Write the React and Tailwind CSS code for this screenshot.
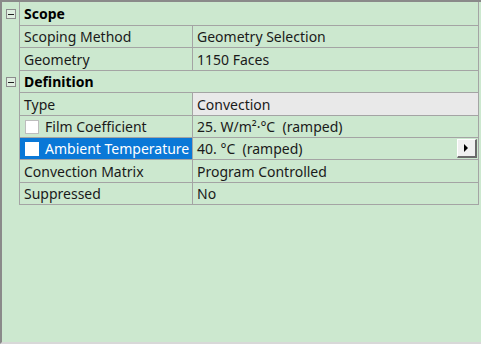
import React from 'react';

const font = { fontFamily: '"Segoe UI", "Noto Sans", "Open Sans", sans-serif' };

const Minus = () => (
    <div className="w-[10px] h-[10px] border border-[#8c8c8c] bg-[#dfeee0] flex items-center justify-center">
        <div className="w-[6px] h-px bg-[#222]" />
    </div>
);

const Check = ({ light }) => (
    <div className={`w-[14px] h-[14px] shrink-0 bg-white border ${light ? 'border-white' : 'border-[#bdbdbd]'}`} />
);

const Header = ({ label, h }) => (
    <div className="flex" style={{ height: h }}>
        <div className="w-[17px] shrink-0 flex items-center justify-center">
            <Minus />
        </div>
        <div className="flex-1 flex items-center pl-[4px] font-bold text-[14px] text-black border-l border-b border-[#a4a4a4]">
            {label}
        </div>
    </div>
);

const Row = ({ name, value, h, check, selected, grey, arrow }) => (
    <div className="flex" style={{ height: h }}>
        <div className="w-[17px] shrink-0" />
        <div
            className={`w-[173px] shrink-0 flex items-center gap-[6px] text-[14px] border-l border-b border-[#a4a4a4] ${check ? 'pl-[5px]' : 'pl-[4px]'} ${selected ? 'bg-[#0a78d7] text-white' : 'text-[#1a1a1a]'}`}
        >
            {check && <Check light={selected} />}
            <span className="whitespace-nowrap">{name}</span>
        </div>
        <div
            className={`flex-1 flex items-center pl-[4px] text-[14px] text-[#1a1a1a] border-l border-b border-[#a4a4a4] ${grey ? 'bg-[#e9e9e9]' : ''}`}
        >
            <span className="flex-1 whitespace-pre">{value}</span>
            {arrow && (
                <div className="w-[20px] h-[19px] mr-px bg-[#f0f0f0] border-r-2 border-b-2 border-[#6a6a6a] border-t border-l border-t-white border-l-white flex items-center justify-center">
                    <svg width="5" height="8" viewBox="0 0 5 8"><path d="M0 0 L4 4 L0 8 Z" fill="#000" /></svg>
                </div>
            )}
        </div>
    </div>
);

export default function App() {
    return (
        <div className="w-[481px] h-[344px] bg-[#cce8cf] overflow-hidden" style={font}>
            <div className="h-full border-t-2 border-l-2 border-b-2 border-t-[#8a8a8a] border-l-[#8a8a8a] border-b-[#d8d8d8] pr-[2px]">
                <div className="border-r border-[#a4a4a4]">
                    <Header label="Scope" h={24} />
                    <Row name="Scoping Method" value="Geometry Selection" h={22} />
                    <Row name="Geometry" value="1150 Faces" h={23} />
                    <Header label="Definition" h={22} />
                    <Row name="Type" value="Convection" h={23} grey />
                    <Row name="Film Coefficient" value={'25. W/m²·°C  (ramped)'} h={22} check />
                    <Row name="Ambient Temperature" value={'40. °C  (ramped)'} h={22} check selected arrow />
                    <Row name="Convection Matrix" value="Program Controlled" h={23} />
                    <Row name="Suppressed" value="No" h={22} />
                </div>
            </div>
        </div>
    );
}
